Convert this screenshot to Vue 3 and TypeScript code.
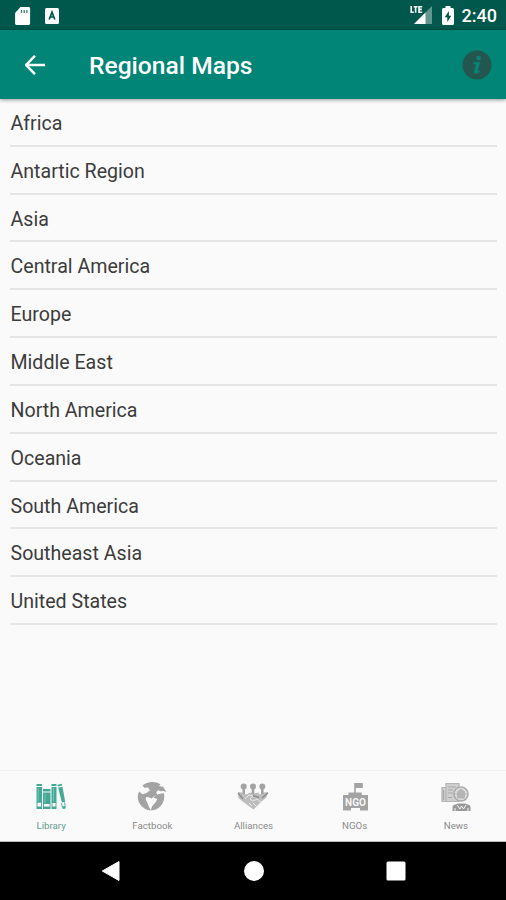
<script setup lang="ts">
interface Tab {
  id: string
  label: string
}

const regions: string[] = [
  'Africa',
  'Antartic Region',
  'Asia',
  'Central America',
  'Europe',
  'Middle East',
  'North America',
  'Oceania',
  'South America',
  'Southeast Asia',
  'United States',
]

const tabs: Tab[] = [
  { id: 'library', label: 'Library' },
  { id: 'factbook', label: 'Factbook' },
  { id: 'alliances', label: 'Alliances' },
  { id: 'ngos', label: 'NGOs' },
  { id: 'news', label: 'News' },
]
</script>

<template>
  <div class="screen">
    <div class="status">
      <svg class="sd" viewBox="0 0 16 20">
        <path d="M6 1h8.200a1.400 1.400 0 0 1 1.400 1.400v15.200a1.400 1.400 0 0 1-1.400 1.400H2a1.400 1.400 0 0 1-1.400-1.400V7z" fill="#fff" />
        <path d="M7 4v3M9.700 4v3M12.400 4v3" stroke="#00574b" stroke-width="1.300" opacity=".75" />
      </svg>
      <svg class="abox" viewBox="0 0 14 16">
        <rect width="14" height="16" rx="1.500" fill="#fff" />
        <path d="M4.200 11.500 7 4.200l2.800 7.300M5.200 9h3.600" fill="none" stroke="#00574b" stroke-width="1.700" />
      </svg>
      <span class="grow"></span>
      <svg class="signal" viewBox="0 0 23 20">
        <path d="M22 2v18H4z" fill="#fff" opacity=".38" />
        <path d="M15.500 8.500V20H4z" fill="#fff" />
        <path d="M1.200 2v6.200h2.600M3.600 2.700h4M5.600 2.700v6M12.200 2.700H9v5.500h3.200M9 5.400h2.800" fill="none" stroke="#fff" stroke-width="1.600" />
      </svg>
      <svg class="battery" viewBox="0 0 12 19">
        <path d="M3.500 0h5v2h2A1.500 1.500 0 0 1 12 3.500v14a1.500 1.500 0 0 1-1.500 1.500h-9A1.500 1.500 0 0 1 0 17.500v-14A1.500 1.500 0 0 1 1.500 2h2z" fill="#fff" />
        <path d="M6.900 5 2.700 11.200h2.600V16l4-6.300H6.900z" fill="#00574b" />
      </svg>
      <span class="clock">2:40</span>
    </div>

    <header class="bar">
      <svg class="back" viewBox="0 0 20 20">
        <path d="M10 .8.900 10l9.100 9.200M1.200 10H20" fill="none" stroke="#fff" stroke-width="2.500" />
      </svg>
      <h1>Regional Maps</h1>
      <svg class="info" viewBox="0 0 30 30">
        <circle cx="15" cy="15" r="14.500" fill="#23564f" />
        <circle cx="16.600" cy="8" r="2.200" fill="#078476" />
        <path d="M11.800 12.200h6l-2.300 8.400q-.3 1 1.900 0l-.3 1.700q-5.500 2.800-4.800-1.100l1.700-6.600q.2-.8-2.500-.7z" fill="#078476" stroke="#078476" stroke-width=".5" />
      </svg>
    </header>

    <ul class="list">
      <li v-for="name in regions" :key="name">{{ name }}</li>
    </ul>

    <nav class="tabs">
      <div v-for="tab in tabs" :key="tab.id" class="tab" :class="{ active: tab.id === 'library' }">
        <svg v-if="tab.id === 'library'" viewBox="0 0 32 30">
          <g fill="currentColor">
            <path d="M1.500 2h5.500v2H1.500zM1.500 5h5.500v15.500H1.500zM1.500 25h5.500v2H1.500z" />
            <path d="M8 7h7.500v2.500H8zM8 10.500h7.500V22H8zM8 25h7.500v2H8z" />
            <path d="M16.500 2h5v2h-5zM16.500 5h5v16h-5zM16.500 25h5v2h-5z" />
            <path d="m22.500 2.700 4.300-.9.400 1.800-4.200.9zM23.200 5.700l4.200-.9 2.800 15-3.300.7zM27.200 25l3.200-.6.400 2-3.200.6z" />
          </g>
          <path d="M2 20v5h4.500v-5zM8.500 21.500V25H15v-3.500zM17 20.500V25h4v-4.500zM26.500 21l.8 4 3-.6-.8-4" fill="none" stroke="currentColor" stroke-width=".9" />
          <path d="M3.200 6v13M18.500 6v13M10 12v9" stroke="#8acabd" stroke-width=".8" />
        </svg>

        <svg v-else-if="tab.id === 'factbook'" viewBox="0 0 32 30">
          <path d="M6.500 3.500C11-.4 19-1.200 24.500 2.500L22.800 4l4.200.8L30.500 10l-3-1-3.500.2-1.500-1.200-2.200 1.900.8 2.900-3.100 1.600-2.500 2-2.800-1.200L10 15l-.3 2.500 1.600 3.300 1.700 4.200 1.700 3.500C7.500 28 2.200 22 1.800 15.800c-.1-2.300.3-4.300 1.300-6.300l3.400 2.700 4-1.200L14 8.300l-2-2.800-3.500.2z" fill="currentColor" />
          <path d="m20.500 12.800 4.500-1.300 3-.3c1.700 8.500-4 17-13.300 17.300l1.300-4 4-4.700 1.200-2.800-3.700-1.500z" fill="currentColor" />
        </svg>

        <svg v-else-if="tab.id === 'alliances'" viewBox="0 0 32 30">
          <g fill="currentColor">
            <circle cx="6.700" cy="4.500" r="3" />
            <circle cx="16" cy="4.500" r="3" />
            <circle cx="25.300" cy="4.500" r="3" />
            <path d="M5.500 7H8v5H5.500zM14.700 7h2.600v5h-2.600zM24 7h2.600v5H24z" />
            <path d="m1 10 4 .5 4 2 4-2 4 1 4-1 2 2 4-2 4-.5-2 6-4 3-8.500 8.500L5 19l-3.500-3z" opacity=".7" />
          </g>
          <path d="m8 17 4-4 4 1-3 3 3 2 4-2 5 4M12 21l3 3M16 21l3 3" fill="none" stroke="#e8e8e8" stroke-width="1" />
          <path d="m1 11 5 6M31 11l-6 5M16 13.500l6 2" fill="none" stroke="#8d8d8d" stroke-width="1.500" />
        </svg>

        <svg v-else-if="tab.id === 'ngos'" viewBox="0 0 32 30">
          <path d="M15.200 1h8.600v5h-7v4.500h6V13H29v15.500h-8V26H12v2.500H4V13h5.500v-2.500h5.700z" fill="currentColor" />
          <text class="sign" x="16.500" y="23.500" text-anchor="middle">NGO</text>
        </svg>

        <svg v-else viewBox="0 0 32 30">
          <path d="M6 1.500h13v18H6zM2 5.500h4v14H2z" fill="#cecece" stroke="#b4b4b4" stroke-width="1.200" />
          <path d="M8 5h8M8 8h5M8 11h5M8 15.500h4M3.500 8v10" stroke="#aaa" stroke-width="1.200" />
          <circle cx="21" cy="12" r="7" fill="#dedede" stroke="#ababab" stroke-width="1.600" />
          <path d="M17.500 10q3.500-5 7 0v6h-7zM14 12h14" fill="#b4b4b4" stroke="#b4b4b4" />
          <path d="M12.500 29v-4q0-2 3-2.500l2.500-1h7l2.500 1q3 .5 3 2.500v4z" fill="#999" />
          <path d="m17 23 3 4 1.500-3 2 3 2.500-4M15 26v3M28 26v3" fill="none" stroke="#f2f2f2" stroke-width="1" />
        </svg>
        <span>{{ tab.label }}</span>
      </div>
    </nav>

    <div class="system">
      <svg viewBox="0 0 20 22"><path d="M18 1.500v19L1.300 11z" fill="#fff" stroke="#fff" stroke-width="1" stroke-linejoin="round" /></svg>
      <svg viewBox="0 0 20 22"><circle cx="10" cy="11" r="10" fill="#fff" /></svg>
      <svg viewBox="0 0 20 22"><rect x=".5" y="1.500" width="19" height="19" rx="1.500" fill="#fff" /></svg>
    </div>
  </div>
</template>

<style>
body {
  margin: 0;
}
</style>

<style scoped>
.screen {
  width: 506px;
  height: 900px;
  display: flex;
  flex-direction: column;
  background: #fafafa;
  font-family: Roboto, "Liberation Sans", sans-serif;
  overflow: hidden;
}

.status {
  height: 30px;
  flex: none;
  box-sizing: border-box;
  display: flex;
  align-items: center;
  padding: 1px 9px 0 14px;
  background: #00574b;
  color: #fff;
}

.sd {
  width: 17px;
  height: 20px;
}

.abox {
  width: 14px;
  height: 16px;
  margin-left: 14px;
}

.grow {
  flex: 1;
}

.signal {
  width: 23px;
  height: 20px;
  margin-top: -3px;
}

.battery {
  width: 12px;
  height: 19px;
  margin: 0 8px 0 9px;
}

.clock {
  font-size: 18px;
  font-weight: 500;
  line-height: 30px;
}

.bar {
  position: relative;
  height: 69px;
  flex: none;
  box-sizing: border-box;
  display: flex;
  align-items: center;
  padding: 0 14px 0 25px;
  background: #008577;
  box-shadow: 0 1px 4px rgba(0, 0, 0, 0.4);
}

.back {
  width: 20px;
  height: 20px;
}

h1 {
  flex: 1;
  margin: 2px 0 0 44px;
  color: #fff;
  font-size: 24.600px;
  font-weight: 500;
  line-height: 30px;
}

.info {
  width: 30px;
  height: 30px;
}

.list {
  flex: 1;
  margin: 0;
  padding: 0 9px 0 10px;
  list-style: none;
}

.list li {
  height: 47.820px;
  box-sizing: border-box;
  border-bottom: 2px solid #e5e5e5;
  color: #3c3c3c;
  font-size: 19.600px;
  font-weight: 400;
  line-height: 50px;
  text-indent: 0.5px;
}

.tabs {
  height: 72px;
  flex: none;
  box-sizing: border-box;
  display: grid;
  grid-template-columns: repeat(5, 1fr);
  border-top: 1px solid #efefef;
  border-bottom: 1px solid #bbb;
}

.tab {
  display: flex;
  flex-direction: column;
  align-items: center;
  padding-top: 11px;
  padding-left: 1px;
  color: #a3a3a3;
}

.tab svg {
  width: 32px;
  height: 30px;
}

.tab span {
  margin-top: 7px;
  color: #8a8a8a;
  font-size: 9.700px;
  line-height: 14px;
}

.tab.active {
  color: #43a895;
}

.tab.active span {
  color: #669b90;
}

.sign {
  fill: #f5f5f5;
  font-size: 10px;
  font-weight: 700;
}

.system {
  height: 58px;
  flex: none;
  box-sizing: border-box;
  display: flex;
  justify-content: space-between;
  align-items: center;
  padding: 0 100px 0 101px;
  background: #000;
}

.system svg {
  width: 20px;
  height: 22px;
}
</style>
